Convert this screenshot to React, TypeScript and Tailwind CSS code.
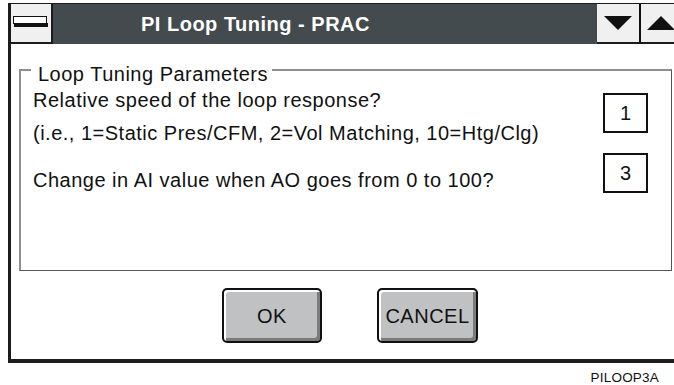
import React from 'react';

function MenuIcon() {
  return (
    <svg width="38" height="14" viewBox="0 0 38 14" className="block">
      <rect x="2.5" y="1.5" width="33" height="7" fill="#fff" stroke="#111" strokeWidth="1" />
      <rect x="3" y="8" width="34" height="4" fill="#111" />
    </svg>
  );
}

function ArrowButton({ dir, width }: { dir: 'up' | 'down'; width: string }) {
  return (
    <div className={`${width} h-full bg-[#f0f0f0] border-b-2 border-[#1c1c1c] flex items-center justify-center`}>
      <svg width="28" height="14" viewBox="0 0 28 14">
        {dir === 'down' ? (
          <polygon points="0,0 28,0 14,14" fill="#111" />
        ) : (
          <polygon points="0,14 28,14 14,0" fill="#111" />
        )}
      </svg>
    </div>
  );
}

function ValueBox({ value }: { value: string }) {
  return (
    <div className="w-[45px] h-[40px] border-2 border-[#111] bg-white flex items-center justify-center text-[20px]">
      {value}
    </div>
  );
}

function DialogButton({ label, width }: { label: string; width: string }) {
  return (
    <button
      className={`${width} h-[55px] rounded-[5px] border-2 border-[#111] bg-[#c0c1c3] shadow-[inset_2px_2px_0_#ffffff,inset_-3px_-3px_0_#7c7c7c] text-[20px] tracking-[0.5px] text-[#111] flex items-center justify-center`}
    >
      {label}
    </button>
  );
}

export default function App() {
  return (
    <div className="w-[674px] h-[385px] bg-white overflow-hidden pt-[3px] pl-[8px] font-['Liberation_Sans',Arial,sans-serif] text-[#111]">
      {/* Window */}
      <div className="w-[673px] h-[360px] border-l-[3px] border-t border-b-4 border-[#1c1c1c] flex flex-col">
        {/* Title bar */}
        <div className="h-[40px] flex bg-[#444b4f]">
          <div className="w-[42px] h-full bg-[#f0f0f0] border-r-2 border-b-2 border-[#1c1c1c] pt-[11px]">
            <MenuIcon />
          </div>
          <div className="flex-1 flex items-center pl-[88px] text-white font-bold text-[20px] tracking-[0.5px]">
            PI Loop Tuning - PRAC
          </div>
          <ArrowButton dir="down" width="w-[42px]" />
          <div className="w-[2px] h-full bg-[#111]" />
          <ArrowButton dir="up" width="w-[40px]" />
        </div>

        {/* Body */}
        <div className="flex-1 flex flex-col">
          <fieldset className="mt-[12px] ml-[8px] w-[653px] h-[215px] border-t-2 border-l-2 border-r border-b border-t-[#8e8e8e] border-l-[#8e8e8e] border-r-[#555] border-b-[#555] p-0 m-0">
            <legend className="ml-[10px] pl-[7px] pr-[4px] pt-[8px] leading-[20px] text-[20px] tracking-[0.5px]">
              Loop Tuning Parameters
            </legend>
            <div className="flex justify-between pl-[12px] pr-[23px]">
              <div className="text-[20px] tracking-[0.5px] leading-[33px]">
                <p>Relative speed of the loop response?</p>
                <p>(i.e., 1=Static Pres/CFM, 2=Vol Matching, 10=Htg/Clg)</p>
                <p className="mt-[14px]">Change in AI value when AO goes from 0 to 100?</p>
              </div>
              <div className="flex flex-col gap-[20px] pt-[9px]">
                <ValueBox value="1" />
                <ValueBox value="3" />
              </div>
            </div>
          </fieldset>

          <div className="flex gap-[55px] pl-[211px] mt-[17px]">
            <DialogButton label="OK" width="w-[100px]" />
            <DialogButton label="CANCEL" width="w-[101px]" />
          </div>
        </div>
      </div>

      {/* Figure label */}
      <div className="flex justify-end pr-[15px] mt-[5px] text-[13.5px] tracking-[0.2px]">PILOOP3A</div>
    </div>
  );
}
